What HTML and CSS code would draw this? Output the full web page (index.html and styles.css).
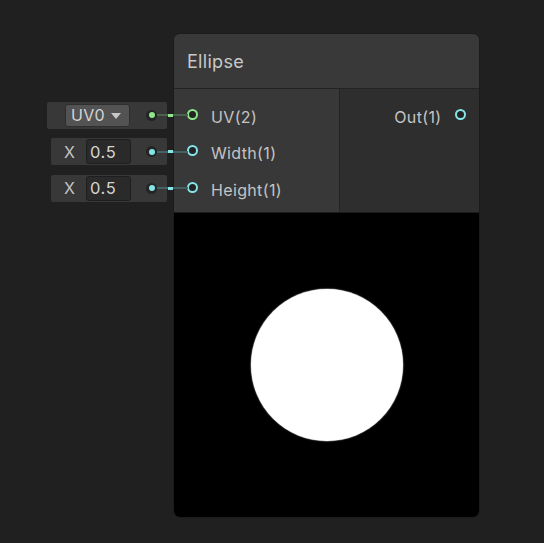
FILE: index.html
```html
<!DOCTYPE html>
<html>
<head>
<meta charset="utf-8">
<link rel="stylesheet" href="styles.css">
</head>
<body>
<div class="canvas">
  <div class="inlines">
    <div class="irow">
      <div class="ibox ibox-wide">
        <div class="dropdown"><span>UV0</span><span class="arrow"></span></div>
      </div>
      <span class="dot green"></span>
      <span class="wire wire-green"><span class="spark"></span></span>
    </div>
    <div class="irow">
      <div class="ibox">
        <span class="xlabel">X</span>
        <div class="field">0.5</div>
      </div>
      <span class="dot cyan"></span>
      <span class="wire wire-cyan"><span class="spark"></span></span>
    </div>
    <div class="irow">
      <div class="ibox">
        <span class="xlabel">X</span>
        <div class="field">0.5</div>
      </div>
      <span class="dot cyan"></span>
      <span class="wire wire-cyan"><span class="spark"></span></span>
    </div>
  </div>
  <div class="node">
    <div class="header">Ellipse</div>
    <div class="ports">
      <div class="inputs">
        <div class="port"><span class="ring ring-green"></span><span class="plabel">UV(2)</span></div>
        <div class="port"><span class="ring ring-cyan"></span><span class="plabel">Width(1)</span></div>
        <div class="port"><span class="ring ring-cyan"></span><span class="plabel">Height(1)</span></div>
      </div>
      <div class="outputs">
        <div class="port port-out"><span class="plabel">Out(1)</span><span class="ring ring-cyan"></span></div>
      </div>
    </div>
    <div class="preview"><div class="ellipse"></div></div>
  </div>
</div>
</body>
</html>
```

FILE: styles.css
```css
* { box-sizing: border-box; }
html, body {
  margin: 0;
  padding: 0;
  background: #202020;
  width: 544px;
  height: 543px;
  overflow: hidden;
  font-family: "Inter", "Noto Sans", sans-serif;
  color: #c4c4c4;
}
.canvas {
  display: flex;
  align-items: flex-start;
  padding: 33px 0 0 47px;
}
.inlines {
  width: 120px;
  margin-top: 68.5px;
  display: flex;
  flex-direction: column;
}
.irow {
  position: relative;
  height: 36.5px;
  display: flex;
  justify-content: flex-end;
  align-items: flex-start;
}
.ibox {
  width: 116px;
  height: 27px;
  background: #383838;
  border-radius: 2px;
  display: flex;
  align-items: center;
  padding-left: 13px;
  gap: 11px;
}
.ibox-wide {
  width: 120px;
  padding-left: 18px;
}
.dropdown {
  width: 65px;
  height: 23px;
  background: #535353;
  border: 1px solid #2e2e2e;
  border-radius: 3px;
  display: flex;
  align-items: center;
  justify-content: space-between;
  padding: 0 8px 0 5px;
  font-size: 16px;
  letter-spacing: 0.3px;
  color: #d4d4d4;
}
.arrow {
  width: 0;
  height: 0;
  border-left: 5px solid transparent;
  border-right: 5px solid transparent;
  border-top: 6px solid #c8c8c8;
  margin-top: 1px;
}
.xlabel {
  font-size: 16px;
  color: #c4c4c4;
  width: 11px;
}
.field {
  width: 45px;
  height: 25px;
  background: #2a2a2a;
  border: 1px solid #1e1e1e;
  border-radius: 3px;
  display: flex;
  align-items: center;
  padding-left: 3px;
  font-size: 16.5px;
  letter-spacing: 0.6px;
  color: #d4d4d4;
}
.dot {
  position: absolute;
  left: 99px;
  top: 8px;
  width: 11px;
  height: 11px;
  border-radius: 50%;
  background: #242424;
}
.dot::after {
  content: "";
  position: absolute;
  left: 2.5px;
  top: 2.5px;
  width: 6px;
  height: 6px;
  border-radius: 50%;
  background: currentColor;
}
.dot.green { color: #8fe58a; }
.dot.cyan { color: #84e4e7; }
.wire {
  position: absolute;
  left: 110px;
  top: 12.5px;
  width: 31px;
  height: 2px;
}
.wire-green { background: #4a6249; color: #8fe58a; }
.wire-cyan { background: #446263; color: #84e4e7; }
.spark {
  position: absolute;
  left: 11px;
  top: -0.5px;
  width: 5px;
  height: 3px;
  background: currentColor;
}
.node {
  margin-left: 6px;
  width: 307px;
  border: 1px solid #1b1b1b;
  border-radius: 7px;
  overflow: hidden;
  background: #2e2e2e;
}
.header {
  height: 55px;
  background: #393939;
  border-bottom: 1px solid #232323;
  display: flex;
  align-items: center;
  padding: 1px 0 0 13px;
  font-size: 18px;
  letter-spacing: 0.3px;
  color: #c8c8c8;
}
.ports {
  display: flex;
  height: 124px;
  border-bottom: 1px solid #1b1b1b;
}
.inputs {
  width: 166px;
  background: #383838;
  border-right: 1px solid #232323;
  padding-top: 7px;
}
.outputs {
  flex: 1;
  background: #2e2e2e;
  padding-top: 7px;
}
.port {
  height: 36.5px;
  display: flex;
  align-items: center;
  padding-left: 13px;
  gap: 13px;
  font-size: 16px;
  letter-spacing: 0.35px;
  color: #c4c4c4;
}
.plabel {
  margin-top: 5px;
}
.port-out {
  justify-content: flex-end;
  padding-left: 0;
  padding-right: 13.5px;
  gap: 13px;
}
.ring {
  width: 11px;
  height: 11px;
  border-radius: 50%;
  border: 2px solid;
  background: #232323;
  flex: none;
}
.ring-green { border-color: #8fe58a; }
.ring-cyan { border-color: #84e4e7; }
.preview {
  height: 304px;
  background: #000;
  display: flex;
  align-items: center;
  justify-content: center;
}
.ellipse {
  width: 152px;
  height: 152px;
  border-radius: 50%;
  background: #fff;
  box-shadow: 0 0 1px 0.5px #888;
}
```
